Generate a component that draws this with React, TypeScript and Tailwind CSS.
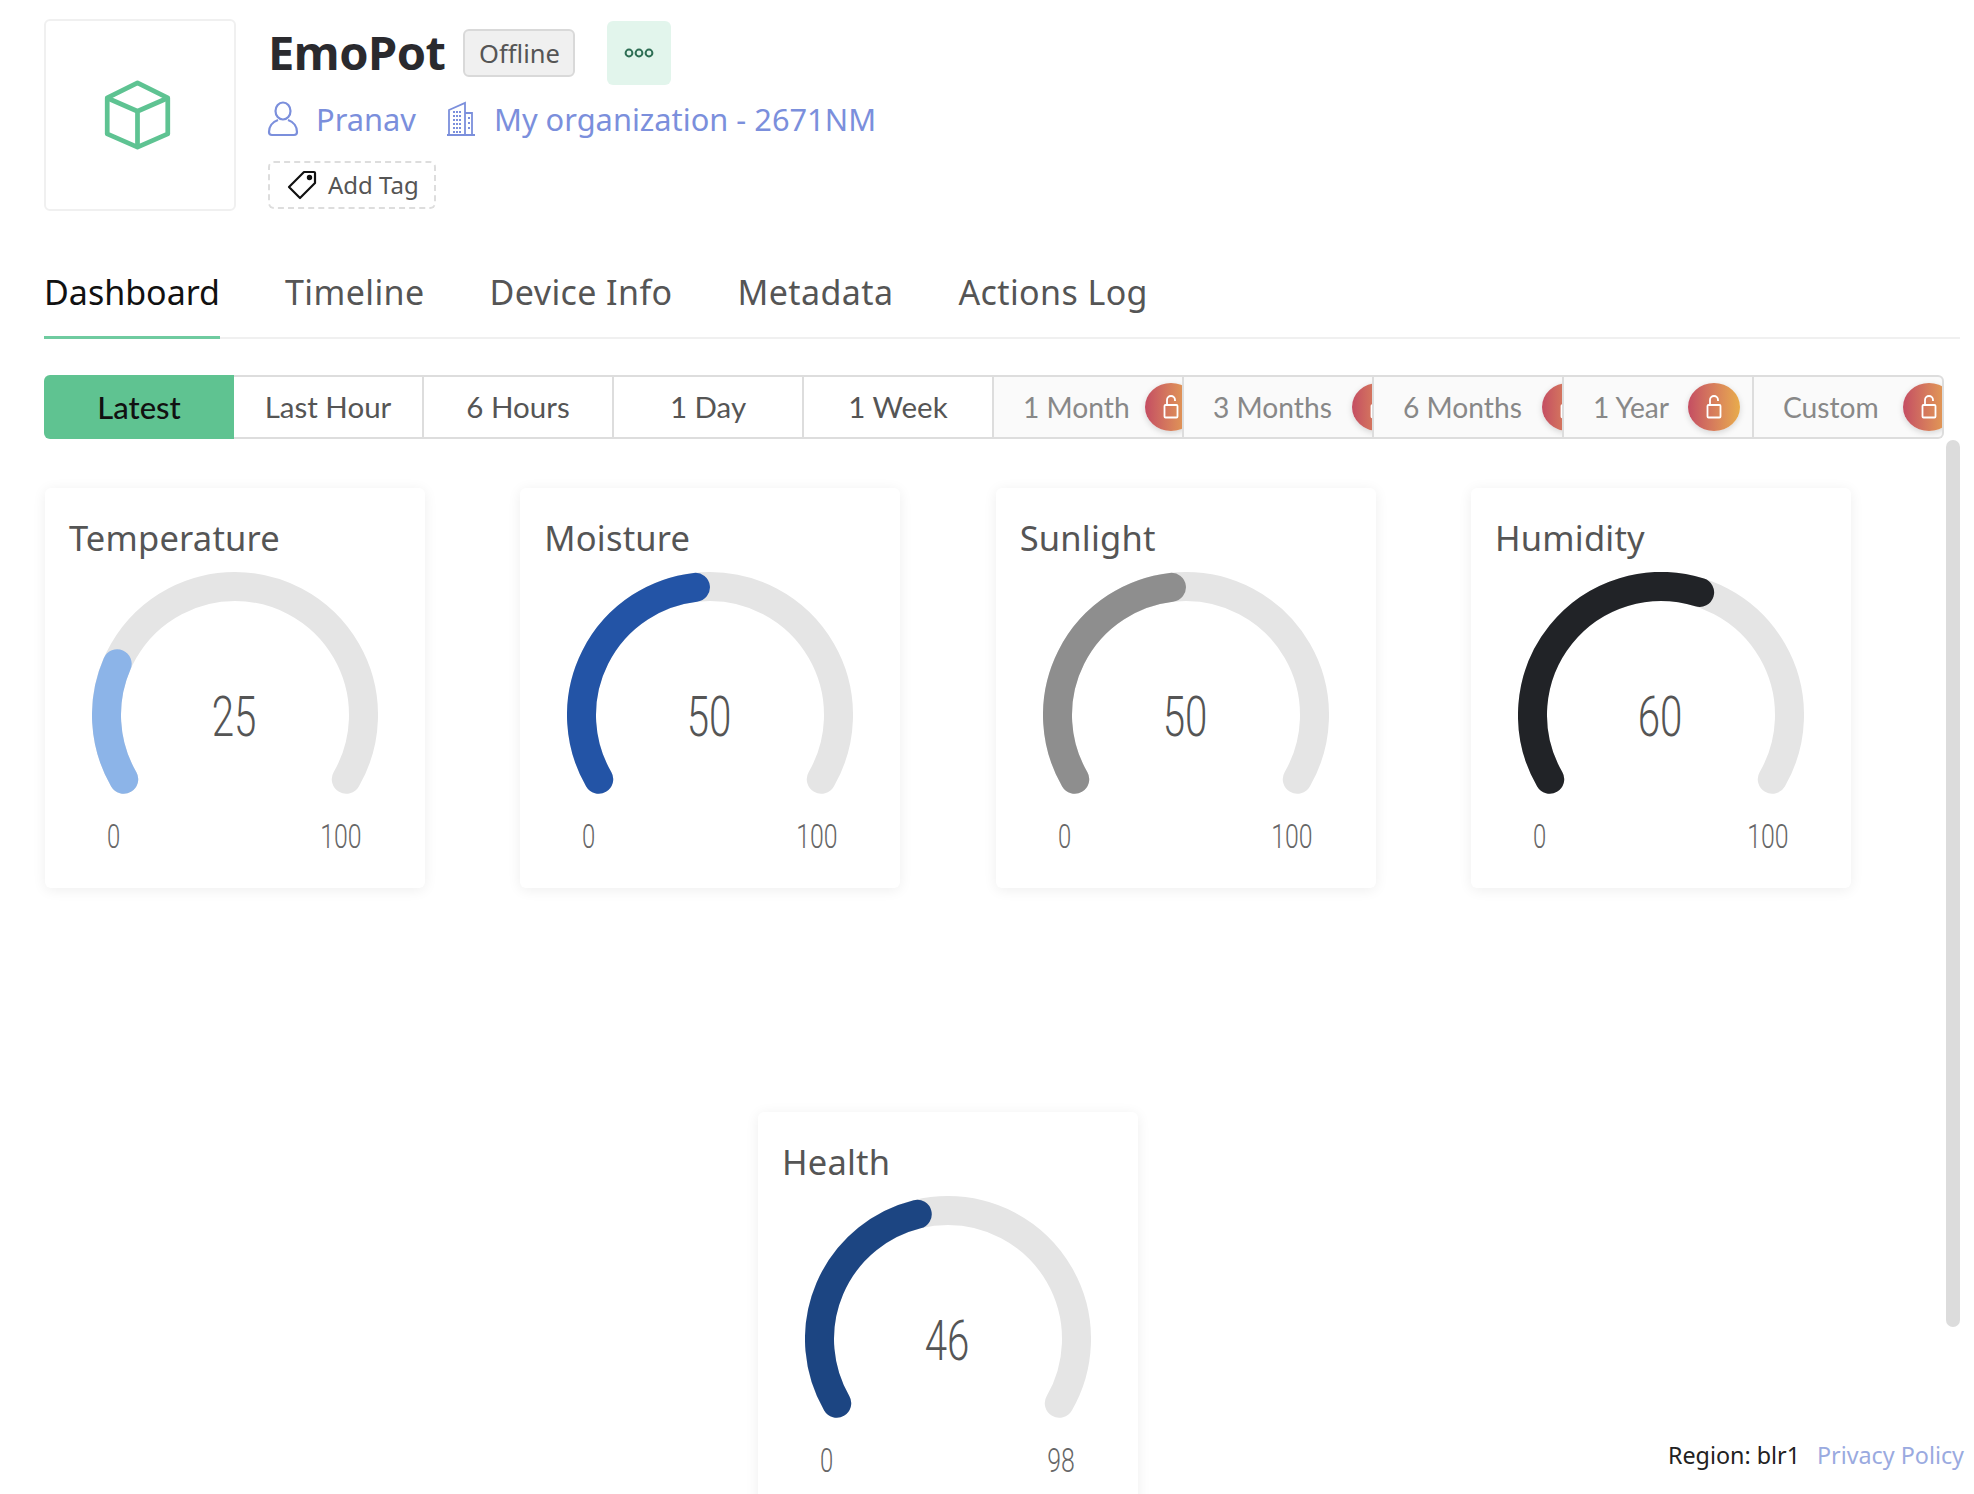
import React from "react";

const sans = "font-['Noto_Sans',sans-serif]";

function polar(r: number, deg: number, cx: number, cy: number) {
  const a = (deg * Math.PI) / 180;
  return [cx + r * Math.cos(a), cy - r * Math.sin(a)];
}

function Gauge({ title, value, max, color }: { title: string; value: number; max: number; color: string }) {
  const r = 128.5;
  const cx = 143;
  const cy = 143;
  const [sx, sy] = polar(r, 210, cx, cy);
  const [ex, ey] = polar(r, -30, cx, cy);
  const sweep = (240 * value) / max - 6.5;
  const [vx, vy] = polar(r, 210 - sweep, cx, cy);
  return (
    <div className="w-[380px] h-[400px] flex-none rounded-[6px] bg-white shadow-[0_2px_14px_rgba(0,0,0,0.07)] flex flex-col">
      <div className="h-[84px] pl-[24px] pt-[26px] text-[34.5px] leading-[48px] text-[#555555] tracking-[0.2px]">{title}</div>
      <div className="relative mx-auto w-[286px] h-[222px]">
        <svg width="286" height="222" viewBox="0 0 286 222">
          <path d={`M${sx} ${sy}A${r} ${r} 0 1 1 ${ex} ${ey}`} fill="none" stroke="#e5e5e5" strokeWidth="29" strokeLinecap="round" />
          <path d={`M${sx} ${sy}A${r} ${r} 0 ${sweep > 180 ? 1 : 0} 1 ${vx} ${vy}`} fill="none" stroke={color} strokeWidth="29" strokeLinecap="round" />
        </svg>
        <div className="absolute left-[-1px] right-[1px] top-[112px] text-center text-[56px] leading-[66px] text-[#555555] font-['Roboto',sans-serif] font-light scale-x-[0.72]">{value}</div>
      </div>
      <div className="ml-[62px] mr-[63px] mt-[22px] flex justify-between text-[34px] leading-[40px] text-[#666666] font-['Roboto',sans-serif] font-light">
        <span className="inline-block scale-x-[0.7] origin-left">0</span>
        <span className="inline-block scale-x-[0.73] origin-right">{max}</span>
      </div>
    </div>
  );
}

function Lock() {
  return (
    <svg width="16" height="24" viewBox="0 0 16 24" fill="none" stroke="#ffffff" strokeWidth="1.8">
      <rect x="1.5" y="10" width="13" height="12.5" rx="1" />
      <path d="M4 10V5a4 4 0 0 1 8 0v1" />
    </svg>
  );
}

const free = ["Last Hour", "6 Hours", "1 Day", "1 Week"];
const locked = [
  { t: "1 Month", w: "w-[122px]", x: "" },
  { t: "3 Months", w: "w-[139px]", x: "" },
  { t: "6 Months", w: "w-[139px]", x: "" },
  { t: "1 Year", w: "w-[95px]", x: "" },
  { t: "Custom", w: "w-[120px]", x: "rounded-r-[6px] border-r-2" },
];
const tabs = ["Dashboard", "Timeline", "Device Info", "Metadata", "Actions Log"];

export default function App() {
  return (
    <div className={`relative h-[1494px] overflow-hidden bg-white pl-[44px] pt-[19px] ${sans}`}>
      <div className="flex">
        <div className="w-[192px] h-[192px] flex-none rounded-[6px] border-2 border-[#f0f0f0] flex items-center justify-center">
          <svg width="67" height="70" viewBox="0 0 70 74" fill="none" stroke="#5ec392" strokeWidth="5" strokeLinejoin="round" className="mr-[5px]">
            <path d="M35 3 67 19V57L35 71 3 57V19Z" />
            <path d="M3 19 35 33 67 19M35 33V71" />
          </svg>
        </div>
        <div className="ml-[32px] flex flex-col">
          <div className="flex items-start h-[66px]">
            <div className="text-[47px] leading-[66px] font-bold text-[#2a2a2e] tracking-[-0.5px]">EmoPot</div>
            <div className="ml-[18px] mt-[10px] w-[112px] h-[48px] rounded-[6px] border-2 border-[#d9d9d9] bg-[#f0f0f0] flex items-center justify-center text-[25.5px] text-[#555555]">Offline</div>
            <div className="ml-[32px] mt-[2px] w-[64px] h-[64px] rounded-[6px] bg-[#e2f5ec] flex items-center justify-center">
              <svg width="30" height="10" viewBox="0 0 30 10" fill="none" stroke="#2f6f55" strokeWidth="2">
                <circle cx="5" cy="5" r="3.4" /><circle cx="15" cy="5" r="3.4" /><circle cx="25" cy="5" r="3.4" />
              </svg>
            </div>
          </div>
          <div className="mt-[14px] flex items-center h-[40px] text-[30.8px] text-[#7b8fdc]">
            <svg width="32" height="36" viewBox="0 0 32 36" fill="none" stroke="#7b8fdc" strokeWidth="2.2" className="-ml-[1px]">
              <ellipse cx="16" cy="10" rx="7.5" ry="8.5" />
              <path d="M11 19C5 21 2 26 2 31c0 2 1 3 3 3h22c2 0 3-1 3-3 0-5-3-10-9-12" />
            </svg>
            <span className="ml-[17px]">Pranav</span>
            <svg width="32" height="36" viewBox="0 0 32 36" fill="none" stroke="#7b8fdc" strokeWidth="1.8" className="ml-[29px]">
              <path d="M2 34h28M4 34V9L20 2v32M20 12h7v22" />
              <path d="M8 11h8M8 15h8M8 19h8M8 23h8M8 27h8M8 31h8M23 17h2M23 22h2M23 27h2" strokeDasharray="2 1" />
            </svg>
            <span className="ml-[17px]">My organization - 2671NM</span>
          </div>
          <div className="mt-[22px] w-[168px] h-[48px] rounded-[6px] border-2 border-dashed border-[#dddddd] flex items-center pl-[17px] text-[24px] text-[#555555]">
            <svg width="30" height="30" viewBox="0 0 30 30" fill="none" stroke="#111111" strokeWidth="2.2" strokeLinejoin="round">
              <path d="M17 2h10a1 1 0 0 1 1 1v10L13 28 2 17Z" />
              <circle cx="22.5" cy="7.5" r="1.6" fill="#111111" />
            </svg>
            <span className="ml-[11px]">Add Tag</span>
          </div>
        </div>
      </div>

      <div className="mt-[39px] w-[1916px] h-[89px] flex gap-[65px] border-b-2 border-[#f0f0f0]">
        {tabs.map((t, i) => (
          <div key={t} className={`h-[89px] pb-[1px] flex items-center text-[34px] border-b-[3px] ${i === 0 ? "text-[#111111] border-[#6fcba0]" : "text-[#555555] border-transparent tracking-[0.4px]"}`}>{t}</div>
        ))}
      </div>

      <div className="mt-[36px] w-[1900px] h-[64px] flex font-['Lato',sans-serif]">
        <div className="w-[190px] flex-none bg-[#5fc391] flex items-center justify-center text-[#111111] text-[31px] font-medium rounded-l-[6px]">Latest</div>
        {free.map((t) => (
          <div key={t} className="w-[190px] flex-none border-y-2 border-r-2 border-[#dddddd] flex items-center justify-center text-[29.5px] text-[#555555]">{t}</div>
        ))}
        {locked.map((l, i) => (
          <div key={l.t} className={`w-[190px] flex-none border-y-2 border-[#dddddd] ${i < 4 ? "border-r-2" : ""} ${l.x} bg-[#fafafa] flex items-center pl-[29px] overflow-hidden text-[28.2px] text-[#888888] whitespace-nowrap`}>
            <span className={`${l.w} flex-none`}>{l.t}</span>
            <div className="w-[52px] h-[48px] flex-none rounded-[50%] bg-gradient-to-r from-[#c44d62] to-[#e8ac4b] flex items-center justify-center shadow-[0_2px_6px_rgba(0,0,0,0.15)]">
              <Lock />
            </div>
          </div>
        ))}
      </div>

      <div className="mt-[49px] w-[1808px] flex flex-wrap justify-center gap-x-[95.4px] gap-y-[224px]">
        <Gauge title="Temperature" value={25} max={100} color="#8cb4e8" />
        <Gauge title="Moisture" value={50} max={100} color="#2354a6" />
        <Gauge title="Sunlight" value={50} max={100} color="#8e8e8e" />
        <Gauge title="Humidity" value={60} max={100} color="#212327" />
        <Gauge title="Health" value={46} max={98} color="#1c4582" />
      </div>

      <div className="absolute left-[1946px] top-[440px] w-[14px] h-[887px] rounded-full bg-[#dcdcdc]" />
      <div className="absolute right-[10px] top-[1439px] flex gap-[17px] text-[23.3px] leading-[32px]">
        <span className="text-[#222222]">Region: blr1</span>
        <span className="text-[#9aaae0]">Privacy Policy</span>
      </div>
    </div>
  );
}
